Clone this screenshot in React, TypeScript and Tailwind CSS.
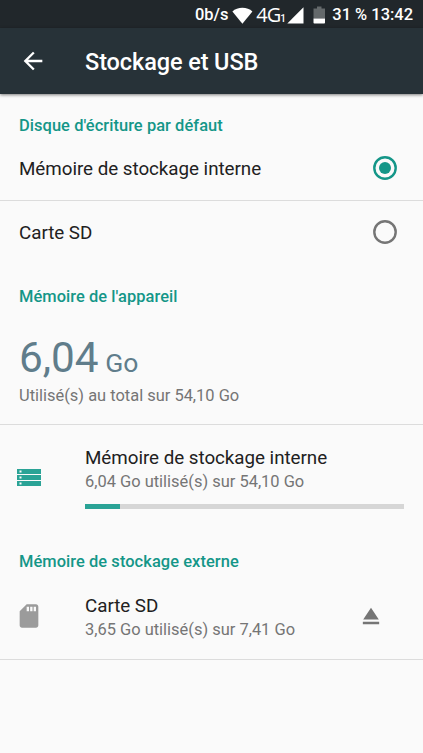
import React from 'react';
import clsx from 'clsx';

// --- Icônes ---
function StatusIcons() {
  return (
    <>
      <svg className="ml-[4px] h-[17px] w-[21px] shrink-0" viewBox="0 0 21 17" fill="#fff">
        <path d="M0.4 4.4C3 1.9 6.500.7 10.400.7s7.400 1.200 10 3.700L10.400 16.800z" />
      </svg>
      <span className="-mt-px ml-[3px] font-['Open_Sans',sans-serif] text-[20px] font-normal leading-7 tracking-[-1px]">4G</span>
      <span className="mt-[8px] w-[5px] text-[10px] leading-3">1</span>
      <svg className="ml-[2px] h-[17px] w-[17px] shrink-0" viewBox="0 0 17 17" fill="#fff">
        <path d="M0.300 16.500L16.500 0.300v16.200z" />
      </svg>
      <svg className="ml-[9px] h-[18px] w-[13px] shrink-0" viewBox="0 0 13 18">
        <path d="M4 0.500h4.500v2H12v10H0.500v-10H4z" fill="#64696b" />
        <path d="M0.500 12.500H12v4.200q0 .8-.8.8H1.300q-.8 0-.8-.8z" fill="#fff" />
      </svg>
    </>
  );
}

function BackIcon() {
  return (
    <svg className="ml-[19px] h-[28px] w-[28px]" viewBox="0 0 24 24" fill="#fff">
      <path d="M20 11H7.830l5.590-5.590L12 4l-8 8 8 8 1.410-1.410L7.830 13H20v-2z" />
    </svg>
  );
}

function RadioIcon({ checked }: { checked?: boolean }) {
  const color = checked ? '#149688' : '#757575';
  return (
    <svg role="radio" aria-checked={!!checked} className="mb-[2px] size-[24px]" viewBox="0 0 24 24">
      <circle cx="12" cy="12" r="10.700" fill="none" stroke={color} strokeWidth="2.400" />
      {checked && <circle cx="12" cy="12" r="6" fill={color} />}
    </svg>
  );
}

function StorageIcon() {
  return (
    <svg className="h-[17px] w-[24px]" viewBox="0 0 24 17">
      {[0, 6, 12].map(y => (
        <g key={y}>
          <rect x="0" y={y} width="24" height="5" fill="#2aa396" />
          <rect x="2.500" y={y + 1.500} width="2" height="2" fill="#fafafa" />
        </g>
      ))}
    </svg>
  );
}

function SdCardIcon() {
  return (
    <svg className="h-[28px] w-[28px]" viewBox="0 0 24 24" fill="#9b9b9b">
      <path d="M18 2h-8L4.020 8 4 20c0 1.100.9 2 2 2h12c1.100 0 2-.9 2-2V4c0-1.100-.9-2-2-2zm-6 6h-2V4h2v4zm3 0h-2V4h2v4zm3 0h-2V4h2v4z" />
    </svg>
  );
}

function EjectIcon() {
  return (
    <svg className="h-[28px] w-[28px]" viewBox="0 0 24 24" fill="#757575">
      <path d="M5 17h14v2H5zm7-12L5.330 15h13.340z" />
    </svg>
  );
}

// --- Éléments de liste ---
function SectionTitle({ children }: { children: React.ReactNode }) {
  return (
    <h2 className="px-[19px] text-[16.45px] font-medium leading-[22px] tracking-[0.06px] text-[#149688]">
      {children}
    </h2>
  );
}

function RadioRow({ label, checked, className }: { label: string; checked?: boolean; className?: string }) {
  return (
    <div className={clsx('flex items-center justify-between pl-[19px] pr-[26px]', className)}>
      <span className="text-[18.8px] leading-6 tracking-[-0.03px]">{label}</span>
      <RadioIcon checked={checked} />
    </div>
  );
}

function VolumeText({ name, summary }: { name: string; summary: string }) {
  return (
    <>
      <p className="text-[18.8px] leading-6 tracking-[-0.03px]">{name}</p>
      <p className="text-[16.45px] leading-6 text-[#757575]">{summary}</p>
    </>
  );
}

// --- Écran principal ---
export default function App() {
  const percentUsed = 11;

  return (
    <div className="min-h-[753px] w-full overflow-hidden bg-[#fafafa] font-['Roboto',sans-serif] text-[#212121]">
      <div className="flex h-[28px] items-center justify-end bg-[#21272b] pr-[10px] pt-[2px] text-[16.45px] font-medium text-white">
        <span>0b/s</span>
        <StatusIcons />
        <span className="ml-[6px] whitespace-pre">31 % 13:42</span>
      </div>

      <header className="flex h-[66px] items-center bg-[#273238] text-white shadow-[0_1px_3px_rgba(0,0,0,0.5)]">
        <BackIcon />
        <h1 className="ml-[38px] pt-[3px] text-[23.5px] font-medium tracking-[-0.1px]">Stockage et USB</h1>
      </header>

      <main>
        <section className="pt-[21px]">
          <SectionTitle>Disque d'écriture par défaut</SectionTitle>
          <RadioRow label="Mémoire de stockage interne" checked className="h-[64px] border-b border-[#dcdcdc]" />
          <RadioRow label="Carte SD" className="h-[64px]" />
        </section>

        <section className="border-b border-[#dcdcdc] pb-[16px] pt-[21px]">
          <SectionTitle>Mémoire de l'appareil</SectionTitle>
          <p className="mt-[24px] px-[19px] text-[42.300px] leading-[52px] text-[#607d8b]">
            6,04<span className="text-[26.500px]"> Go</span>
          </p>
          <p className="-mt-[5px] px-[19px] text-[16.45px] leading-6 text-[#757575]">Utilisé(s) au total sur 54,10 Go</p>
        </section>

        <section className="flex pl-[17px] pr-[19px] pt-[21px]">
          <div className="w-[68px] shrink-0 pt-[23px]">
            <StorageIcon />
          </div>
          <div className="flex-1">
            <VolumeText name="Mémoire de stockage interne" summary="6,04 Go utilisé(s) sur 54,10 Go" />
            <div className="mt-[10px] h-[5px] bg-[#d6d6d6]">
              <div className="h-full bg-[#2aa396]" style={{ width: `${percentUsed}%` }} />
            </div>
          </div>
        </section>

        <section className="border-b border-[#dcdcdc] pb-[17px] pt-[42px]">
          <SectionTitle>Mémoire de stockage externe</SectionTitle>
          <div className="mt-[21px] flex items-start pl-[14.500px] pr-[38px]">
            <div className="w-[70.500px] pt-[8px]">
              <SdCardIcon />
            </div>
            <div className="flex-1">
              <VolumeText name="Carte SD" summary="3,65 Go utilisé(s) sur 7,41 Go" />
            </div>
            <div className="pt-[8px]">
              <EjectIcon />
            </div>
          </div>
        </section>
      </main>
    </div>
  );
}
